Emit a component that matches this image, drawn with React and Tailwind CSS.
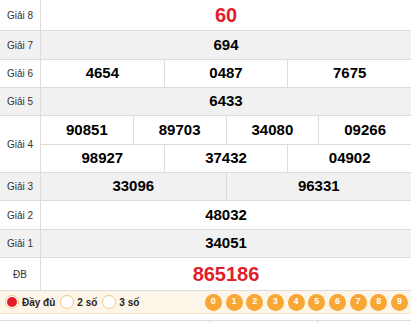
import React from 'react'

const rows = [
    { label: 'Giải 8', h: 'h-[31px]', bg: 'bg-white', lines: [['60']], big: true },
    { label: 'Giải 7', h: 'h-[29px]', bg: 'bg-[#f1f1f1]', lines: [['694']] },
    { label: 'Giải 6', h: 'h-[28px]', bg: 'bg-white', lines: [['4654', '0487', '7675']] },
    { label: 'Giải 5', h: 'h-[28px]', bg: 'bg-[#f1f1f1]', lines: [['6433']] },
    { label: 'Giải 4', h: 'h-[57px]', bg: 'bg-white', lines: [['90851', '89703', '34080', '09266'], ['98927', '37432', '04902']] },
    { label: 'Giải 3', h: 'h-[28px]', bg: 'bg-[#f1f1f1]', lines: [['33096', '96331']] },
    { label: 'Giải 2', h: 'h-[29px]', bg: 'bg-white', lines: [['48032']] },
    { label: 'Giải 1', h: 'h-[28px]', bg: 'bg-[#f1f1f1]', lines: [['34051']] },
    { label: 'ĐB', h: 'h-[33px]', bg: 'bg-white', lines: [['865186']], big: true },
]

const Radio = ({ checked, label }) => (
    <div className="flex items-center gap-[3px]">
        <span className="w-[14px] h-[14px] rounded-full border border-[#f2c98f] bg-white flex items-center justify-center">
            {checked && <span className="w-[10px] h-[10px] rounded-full bg-[#e51d2a]" />}
        </span>
        <span className="text-[10px] font-bold text-[#222]">{label}</span>
    </div>
)

const App = () => {
    return (
        <div className="w-[411px] h-[323px] overflow-hidden bg-white" style={{ fontFamily: '"Liberation Sans", Arial, sans-serif' }}>
            {rows.map((row) => (
                <div key={row.label} className={`flex border-b border-[#dcdcdc] ${row.h} ${row.bg}`}>
                    <div className="w-[41px] shrink-0 border-r border-[#dcdcdc] flex items-center justify-center text-[10px] text-[#333]">
                        {row.label}
                    </div>
                    <div className="flex-1 flex flex-col">
                        {row.lines.map((line, i) => (
                            <div key={i} className={`flex-1 flex ${i > 0 ? 'border-t border-[#dcdcdc]' : ''}`}>
                                {line.map((num, j) => (
                                    <div
                                        key={num}
                                        className={`flex-1 basis-0 flex items-center justify-center font-bold ${j > 0 ? 'border-l border-[#dcdcdc]' : ''} ${row.big ? 'text-[20px] text-[#e0202c]' : 'text-[15px] text-black'}`}
                                    >
                                        {num}
                                    </div>
                                ))}
                            </div>
                        ))}
                    </div>
                </div>
            ))}
            <div className="h-[23px] bg-[#fdf6e8] border-b border-[#f5e4c6] flex items-center justify-between pl-[5px] pr-[3px]">
                <div className="flex items-center gap-[5px]">
                    <Radio checked label="Đầy đủ" />
                    <Radio label="2 số" />
                    <Radio label="3 số" />
                </div>
                <div className="flex items-center gap-[3.7px]">
                    {['0', '1', '2', '3', '4', '5', '6', '7', '8', '9'].map((d) => (
                        <span key={d} className="w-[17px] h-[17px] rounded-full bg-[#f8a634] text-white text-[9px] font-bold flex items-center justify-center">
                            {d}
                        </span>
                    ))}
                </div>
            </div>
            <div className="mt-[6px] flex h-[10px] border-t border-[#dcdcdc]">
                <div className="w-[210px] border-r border-[#dcdcdc]" />
                <div className="w-[108px] border-r border-[#dcdcdc]" />
            </div>
        </div>
    )
}

export default App
